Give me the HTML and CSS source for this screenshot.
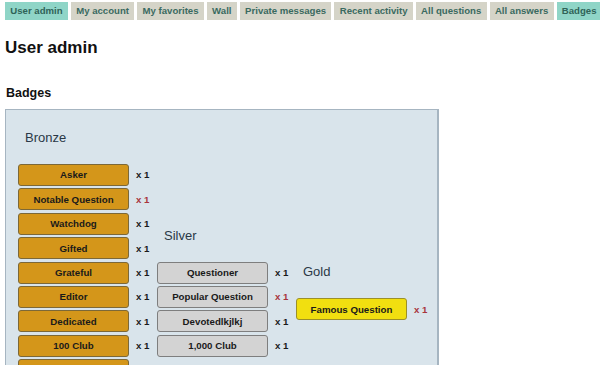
FILE: index.html
```html
<!DOCTYPE html>
<html>
<head>
<meta charset="utf-8">
<link rel="stylesheet" href="styles.css">
</head>
<body>
<ul class="tabs">
  <li class="tab active">User admin</li>
  <li class="tab">My account</li>
  <li class="tab">My favorites</li>
  <li class="tab">Wall</li>
  <li class="tab">Private messages</li>
  <li class="tab">Recent activity</li>
  <li class="tab">All questions</li>
  <li class="tab">All answers</li>
  <li class="tab active">Badges</li>
</ul>
<h2 class="title">User admin</h2>
<h3 class="subtitle">Badges</h3>
<div class="badgebox">
  <div class="col">
    <h4 class="colhead">Bronze</h4>
    <div class="row"><span class="badge bronze">Asker</span><span class="count">x 1</span></div>
    <div class="row"><span class="badge bronze">Notable Question</span><span class="count red">x 1</span></div>
    <div class="row"><span class="badge bronze">Watchdog</span><span class="count">x 1</span></div>
    <div class="row"><span class="badge bronze">Gifted</span><span class="count">x 1</span></div>
    <div class="row"><span class="badge bronze">Grateful</span><span class="count">x 1</span></div>
    <div class="row"><span class="badge bronze">Editor</span><span class="count">x 1</span></div>
    <div class="row"><span class="badge bronze">Dedicated</span><span class="count">x 1</span></div>
    <div class="row"><span class="badge bronze">100 Club</span><span class="count">x 1</span></div>
    <div class="row"><span class="badge bronze">Commentator</span><span class="count">x 1</span></div>
    <div class="row"><span class="badge bronze">Supporter</span><span class="count">x 1</span></div>
    <div class="row"><span class="badge bronze">Critic</span><span class="count">x 1</span></div>
    <div class="row"><span class="badge bronze">Scholar</span><span class="count">x 1</span></div>
  </div>
  <div class="col">
    <h4 class="colhead">Silver</h4>
    <div class="row"><span class="badge silver">Questioner</span><span class="count">x 1</span></div>
    <div class="row"><span class="badge silver">Popular Question</span><span class="count red">x 1</span></div>
    <div class="row"><span class="badge silver">Devotedlkjlkj</span><span class="count">x 1</span></div>
    <div class="row"><span class="badge silver">1,000 Club</span><span class="count">x 1</span></div>
  </div>
  <div class="col">
    <h4 class="colhead">Gold</h4>
    <div class="row"><span class="badge gold">Famous Question</span><span class="count red">x 1</span></div>
  </div>
</div>
</body>
</html>
```

FILE: styles.css
```css
html, body {
  margin: 0;
  padding: 0;
  background: #ffffff;
  font-family: "Liberation Sans", Arial, sans-serif;
  color: #111;
}

.tabs {
  list-style: none;
  margin: 2px 0 0 5px;
  padding: 0;
  display: flex;
  gap: 3px;
}

.tab {
  height: 18px;
  line-height: 18px;
  padding: 0 5.3px;
  background: #d5d4c8;
  color: #3a6a60;
  font-size: 9.6px;
  font-weight: bold;
  white-space: nowrap;
}

.tab.active {
  background: #8fd5c7;
  color: #2f6358;
}

.title {
  margin: 18px 0 0 5px;
  font-size: 17px;
  line-height: 20px;
  font-weight: bold;
  color: #111;
}

.subtitle {
  margin: 27px 0 0 6px;
  font-size: 12.5px;
  line-height: 16px;
  font-weight: bold;
  color: #111;
}

.badgebox {
  margin: 8px 0 0 5px;
  width: 434px;
  background: #d9e4eb;
  border: 1px solid #a6b5c1;
  border-right-width: 2px;
  display: flex;
  align-items: center;
  padding: 20px 0 20px 12px;
  box-sizing: border-box;
}

.col {
  width: 139px;
  display: flex;
  flex-direction: column;
  gap: 2.4px;
}

.colhead {
  margin: 0 0 15.6px 7px;
  font-size: 13px;
  line-height: 16px;
  font-weight: normal;
  color: #2a3846;
}

.row {
  display: flex;
  align-items: center;
}

.badge {
  width: 111px;
  height: 22px;
  box-sizing: border-box;
  border: 1px solid #7a6636;
  border-radius: 3px;
  display: flex;
  align-items: center;
  justify-content: center;
  font-size: 9.7px;
  font-weight: bold;
  color: #1a1a1a;
}

.bronze {
  background: #d4961a;
  border-color: #7c6838;
}

.silver {
  background: #d3d3d3;
  border-color: #7e7e7e;
}

.gold {
  background: #f1df10;
  border-color: #9c9028;
}

.count {
  margin-left: 7px;
  font-size: 9.7px;
  font-weight: bold;
  color: #1a1a1a;
}

.count.red {
  color: #a8343c;
}
```
